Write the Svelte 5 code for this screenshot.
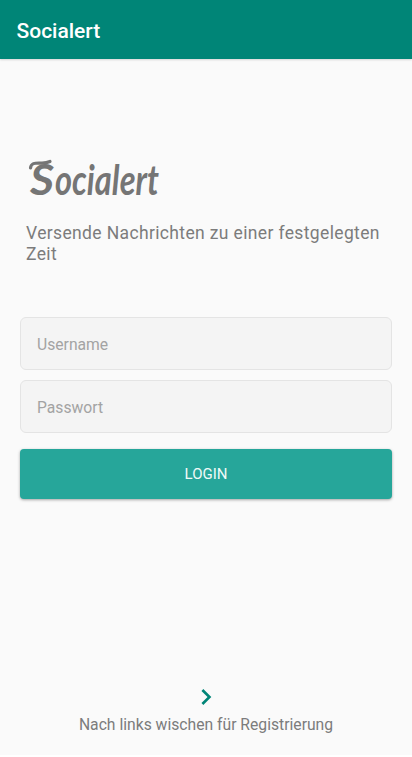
<script>
  let username = $state('');
  let password = $state('');
</script>

<div class="screen">
  <header><h1>Socialert</h1></header>
  <main>
    <svg class="logo" width="160" height="68" viewBox="0 0 160 68" role="img" aria-label="Socialert">
      <path d="M4.500 22C5 17 9 17 13 17C18 17.500 21 17 24 15.500" />
      <text class="initial" x="4" y="48.500" textLength="24" lengthAdjust="spacingAndGlyphs">S</text>
      <text class="word" x="29" y="49" textLength="104" lengthAdjust="spacingAndGlyphs">ocialert</text>
    </svg>
    <p class="tagline">Versende Nachrichten zu einer festgelegten Zeit</p>
    <form onsubmit={(e) => e.preventDefault()}>
      <input type="text" placeholder="Username" bind:value={username} />
      <input type="password" placeholder="Passwort" bind:value={password} />
      <button type="submit">LOGIN</button>
    </form>
  </main>
  <footer>
    <svg width="32" height="32" viewBox="0 0 24 24"><path d="M10 6 8.59 7.41 13.17 12l-4.58 4.59L10 18l6-6z" /></svg>
    <p>Nach links wischen für Registrierung</p>
  </footer>
</div>

<style>
  :global(body) { background: #fff; }
  .screen {
    box-sizing: border-box;
    width: 100%;
    height: 755px;
    display: flex;
    flex-direction: column;
    background: #fafafa;
    font-family: Roboto, sans-serif;
    color: #7c7c7c;
  }
  h1, p { margin: 0; }
  header {
    height: 59px;
    padding: 2px 16.5px 0;
    box-sizing: border-box;
    display: flex;
    align-items: center;
    background: #008577;
    box-shadow: 0 1px 2px rgba(0, 0, 0, 0.15);
  }
  h1 { font-size: 21px; font-weight: 500; color: #fff; }
  main { flex: 1; padding: 87px 20px 0; }
  .logo { display: block; margin-left: 6px; overflow: visible; }
  .logo text { fill: #757575; }
  .initial { font: italic 700 42px Lato, sans-serif; }
  .word { font: italic 700 42px Lato, sans-serif; }
  .logo path { fill: none; stroke: #757575; stroke-width: 3.2; stroke-linecap: round; }
  .tagline {
    margin: 9px 6px 0;
    font-size: 17.5px;
    line-height: 21px;
    letter-spacing: 0.36px;
  }
  form { display: flex; flex-direction: column; margin: 52px 0.4px 0; }
  input {
    box-sizing: border-box;
    height: 53px;
    margin: 0 0 10.4px;
    padding: 2px 15.6px 0;
    border: 1.5px solid #e4e4e4;
    border-radius: 6px;
    background: #f4f4f4;
    font: 15.7px Roboto, sans-serif;
    color: #757575;
    outline: none;
  }
  input::placeholder { color: #a3a3a3; opacity: 1; }
  button {
    height: 50px;
    margin-top: 5px;
    padding-top: 2px;
    border: 0;
    border-radius: 4px;
    background: #26a69a;
    color: #f0faf8;
    font: 15px Roboto, sans-serif;
    box-shadow: 0 1px 3px rgba(0, 0, 0, 0.35);
  }
  footer {
    display: flex;
    flex-direction: column;
    align-items: center;
    padding-bottom: 20px;
    font-size: 15.7px;
    line-height: 20px;
  }
  footer svg { display: block; fill: #008577; margin-bottom: 2px; }
</style>
